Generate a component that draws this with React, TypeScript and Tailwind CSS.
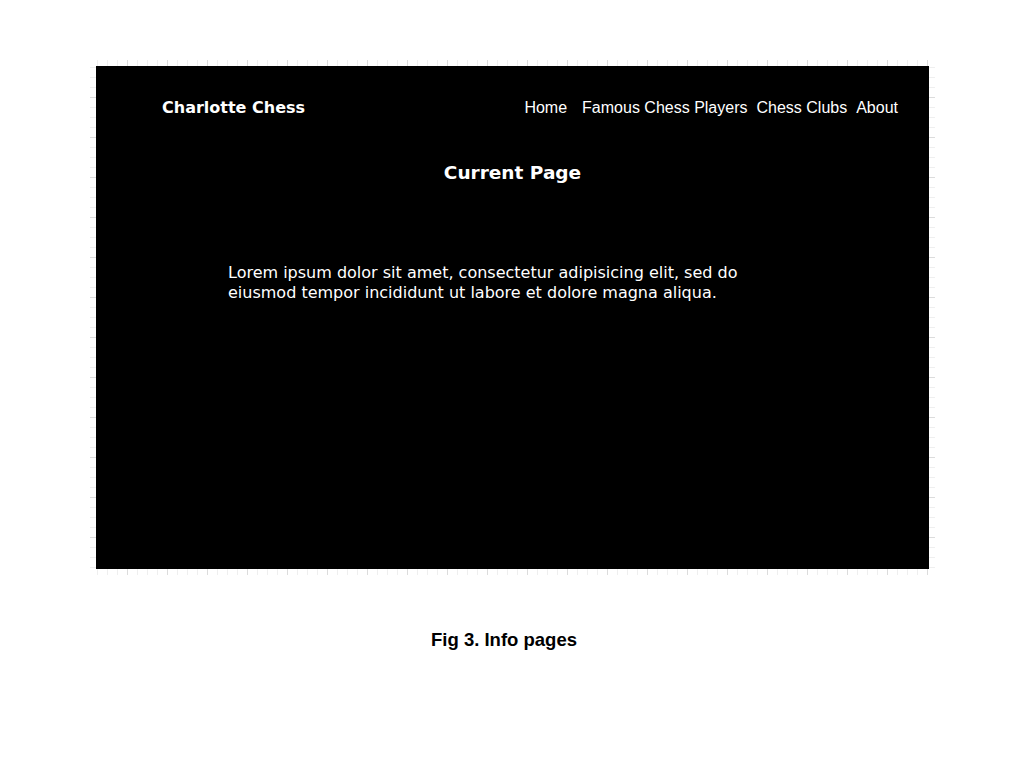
const navLinks = [
  { label: "Home", gap: "" },
  { label: "Famous Chess Players", gap: "ml-[15px]" },
  { label: "Chess Clubs", gap: "ml-[9px]" },
  { label: "About", gap: "ml-[9px]" },
];

function Mockup() {
  return (
    <div className="flex h-[503px] flex-col bg-black text-white">
      <header className="flex items-center justify-between pt-[31px] pl-[66px] pr-[31px]">
        <span className="font-['DejaVu_Sans',sans-serif] text-[16px] font-bold leading-[22px]">
          Charlotte Chess
        </span>
        <nav className="flex font-['Liberation_Sans',Arial,sans-serif] text-[16px] leading-[22px]">
          {navLinks.map((l) => (
            <a key={l.label} href="#" className={l.gap}>
              {l.label}
            </a>
          ))}
        </nav>
      </header>

      <h1 className="mt-[42px] text-center font-['DejaVu_Sans',sans-serif] text-[18.5px] font-bold leading-[24px]">
        Current Page
      </h1>

      <p className="mt-[78px] pl-[132px] font-['DejaVu_Sans',sans-serif] text-[16px] leading-[20px]">
        Lorem ipsum dolor sit amet, consectetur adipisicing elit, sed do
        <br />
        eiusmod tempor incididunt ut labore et dolore magna aliqua.
      </p>
    </div>
  );
}

export default function App() {
  return (
    <div className="flex min-h-screen flex-col bg-white pt-[60px]">
      <div className="ml-[90px] w-[845px] p-[6px] bg-[linear-gradient(to_right,#dcdcdc_1px,transparent_1px),linear-gradient(to_bottom,#dcdcdc_1px,transparent_1px),linear-gradient(to_right,#efefef_1px,transparent_1px),linear-gradient(to_bottom,#efefef_1px,transparent_1px)] bg-[size:40px_40px,40px_40px,10px_10px,10px_10px] bg-[position:37px_37px,37px_37px,7px_7px,7px_7px]">
        <Mockup />
      </div>

      <p className="mt-[54px] pr-[16px] text-center font-['Liberation_Sans',Arial,sans-serif] text-[18.5px] font-bold leading-[22px] text-black">
        Fig 3. Info pages
      </p>
    </div>
  );
}
